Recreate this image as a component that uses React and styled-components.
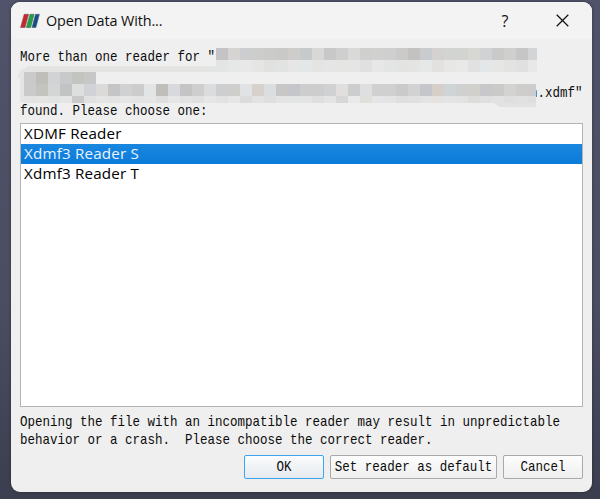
import React from "react";
import styled, { createGlobalStyle } from "styled-components";

const GlobalStyle = createGlobalStyle`
  * { box-sizing: border-box; }
  body { margin: 0; overflow: hidden; }
`;

const Desktop = styled.main`
  width: 600px;
  height: 499px;
  padding: 2px 8px 7px 11px;
  background: linear-gradient(180deg, #505369 0%, #4b4e62 60%, #3b3e4e 100%);
`;

const Dialog = styled.section`
  height: 490px;
  display: flex;
  flex-direction: column;
  overflow: hidden;
  border-radius: 9px;
  background: #efefef;
  box-shadow: 0 0 3px rgba(25, 27, 40, 0.6);
`;

const TitleBar = styled.header`
  height: 37px;
  flex: none;
  display: flex;
  align-items: center;
  padding: 0 23px 0 9px;
  background: #f3f3f3;
`;

const Title = styled.h1`
  margin: 0 auto 0 6px;
  font: 400 14.4px/20px "Open Sans", sans-serif;
  letter-spacing: -0.1px;
  color: #111;
`;

const TitleButton = styled.button`
  display: flex;
  align-items: center;
  justify-content: center;
  width: 14px;
  height: 20px;
  padding: 0;
  margin-left: ${(p) => p.$gap || 0}px;
  border: 0;
  background: none;
  color: #111;
  font: 400 16px/18px "Open Sans", sans-serif;
`;

const Body = styled.div`
  flex: 1;
  display: flex;
  flex-direction: column;
  padding: 9px 9px 13px 9px;
`;

const Message = styled.div`
  position: relative;
  flex: none;
  height: ${(p) => p.$height}px;
`;

const Mono = styled.div`
  width: 120%;
  height: 18px;
  transform: scaleX(0.8333);
  transform-origin: left center;
  white-space: pre;
  font: 400 15px/20px "Liberation Mono", monospace;
  color: #0c0c0c;
`;

const Mosaic = styled.div`
  position: absolute;
  left: ${(p) => p.$x}px;
  top: ${(p) => p.$y}px;
  width: ${(p) => p.$w}px;
  height: ${(p) => p.$h}px;
  display: flex;
  overflow: hidden;
`;

const Cell = styled.span`
  flex: 0 0 12px;
  background: ${(p) => p.$color};
`;

const Smudge = styled.svg`
  position: absolute;
  left: -8px;
  top: 17px;
`;

const List = styled.ul`
  height: 284px;
  flex: none;
  margin: 2px 0 6px;
  padding: 0;
  list-style: none;
  border: 1px solid #b4b4b4;
  background: #fff;
`;

const Item = styled.li`
  height: 20px;
  padding-left: 3px;
  font: 400 15.2px/18px "Open Sans", sans-serif;
  letter-spacing: 0.18px;
  color: ${(p) => (p.$selected ? "#e9f4ff" : "#000")};
  background: ${(p) => (p.$selected ? "linear-gradient(#1a87df, #0b7bd9)" : "transparent")};
`;

const Actions = styled.footer`
  display: flex;
  justify-content: flex-end;
  gap: 6px;
  margin-top: 6px;
`;

const Button = styled.button`
  width: ${(p) => p.$width}px;
  height: 24px;
  padding: 0;
  display: flex;
  align-items: center;
  justify-content: center;
  border: 1px solid ${(p) => (p.$primary ? "#3ba4ef" : "#a9a9a9")};
  border-radius: 2px;
  background: ${(p) => (p.$primary ? "linear-gradient(#fbfcfd, #e5eaef)" : "linear-gradient(#fdfdfd, #efefef)")};
`;

const ButtonText = styled.span`
  flex: none;
  padding-top: 2px;
  transform: scaleX(0.8333);
  white-space: pre;
  font: 400 15px/20px "Liberation Mono", monospace;
  color: #0c0c0c;
`;

const mosaics = [
  { x: 196, y: 0, w: 321, h: 12, colors: "c4c4c6 d6d4d2 cccdcf cdcdcb cbcbca c9c9c8 cecdcb c6cacb d8d8d6 c8c8c8 cfcfcf d9d9d7 cfcfcf d0d0ce cfcfcf cacac9 c3c2c0 c8cccf d4d2d0 d2d4d3 d3d3d2 d7d7d4 d0d2d4 cacaca cfcfcd c6c6c6 d3d4d6" },
  { x: 196, y: 12, w: 321, h: 12, colors: "e3e5e4 e6e7e7 e8e8e8 e5e5e4 e0e1e0 e1e3e2 e6e6e6 e4e7e7 e4e4e2 e5e5e5 e5e5e4 e5e5e5 e0e0e1 e7e7e7 e3e5e4 e3e3e2 e4e4e2 e5e8e7 e3e1e0 e7e7e7 e9e9e7 e1e1e1 e4e7e7 e6e6e5 e3e3e3 e0e0e0 e8e8e8" },
  { x: 4, y: 24, w: 72, h: 12, colors: "cacaca bfbeb9 d1d3d5 c8c9ca c3c3bf c7c7c7" },
  { x: 4, y: 36, w: 512, h: 12, colors: "cacaca c3c3c0 d4d6d5 c3c3c3 dddfde d1d2d5 dcdad8 c5c5c5 cfd1d2 cccccc e3e4e5 bfbeba d8d9dc c4c4c4 cececf dbdcdd cdcecf cececc e1e2e4 d7d1cc dadee1 c8c7c6 c5c6c9 cecdcd cdcdcd d0d1d2 e0dfdd cbcecc dfdfe2 d0d0d0 d0d0d0 cacaca d2d2d2 c5c6ca d5cec9 cfd4d7 d0d0d0 d1d0cd c8c8ca cacac9 d3d3d2 cecdcb cccccc" },
  { x: 4, y: 48, w: 512, h: 7, colors: "e3e3e3 e5e5e4 e1e2e2 e5e5e5 c9c9c9 e1e1e1 e5e5e5 e3e3e3 e5e7e7 e4e4e4 e5e5e5 dfdfdd e6e6e6 e2e2e2 e0e0e0 e6e6e6 e2e2e3 e6e6e6 dcdcdc e2e2e3 dfdfdf e3e3e3 e2e4e3 e3e3e3 dfdfdf e3e3e3 d7d7d7 e9e9e9 dfdfdc e5e5e5 e3e3e3 dfdfdf e0e0df e3e3e3 e5e1df e3e5e5 e2e2e2 dddddb e0e0e0 e2e2e2 dfdfdf e1e1e1 dfdfdf" },
];

const readers = ["XDMF Reader", "Xdmf3 Reader S", "Xdmf3 Reader T"];

function Logo() {
  return (
    <svg width="20" height="16" viewBox="0 0 20 16">
      <path d="M4.2 1.3h4.4L5 14.5H.6z" fill="#c9272d" stroke="#765356" strokeWidth=".6" />
      <path d="M10 1.3h4.1l-3.5 13.2H6.4z" fill="#1fa247" stroke="#48684d" strokeWidth=".6" />
      <path d="M15.5 1.3h3.9l-3.5 13.2H12z" fill="#104f8c" stroke="#53616e" strokeWidth=".6" />
    </svg>
  );
}

export default function App() {
  return (
    <>
      <GlobalStyle />
      <Desktop>
        <Dialog>
          <TitleBar>
            <Logo />
            <Title>Open Data With...</Title>
            <TitleButton aria-label="Help">?</TitleButton>
            <TitleButton $gap={43} aria-label="Close">
              <svg width="13" height="13" viewBox="0 0 13 13">
                <path d="M.7.7l11.6 11.6M12.3.7L.7 12.3" stroke="#111" strokeWidth="1.25" />
              </svg>
            </TitleButton>
          </TitleBar>
          <Body>
            <Message $height={73}>
              <Mono>{'More than one reader for "'}</Mono>
              <Mono />
              <Mono>{" ".repeat(68) + 'n.xdmf"'}</Mono>
              <Mono>found. Please choose one:</Mono>
              <Smudge width="526" height="43" viewBox="0 0 526 43">
                <path d="M8 6l8-5h188v6H84v12H12v-4l-7-3z" fill="#e4e4e3" />
                <path d="M8 12h5v25H8z" fill="#e3e4e3" />
                <path d="M80 36h398l10 6h36v-6z" fill="#e2e2e2" />
              </Smudge>
              {mosaics.map((m) => (
                <Mosaic key={`${m.x}-${m.y}`} $x={m.x} $y={m.y} $w={m.w} $h={m.h}>
                  {m.colors.split(" ").map((c, i) => (
                    <Cell key={i} $color={`#${c}`} />
                  ))}
                </Mosaic>
              ))}
            </Message>
            <List>
              {readers.map((name, i) => (
                <Item key={name} $selected={i === 1}>{name}</Item>
              ))}
            </List>
            <Message $height={36}>
              <Mono>Opening the file with an incompatible reader may result in unpredictable</Mono>
              <Mono>{"behavior or a crash.  Please choose the correct reader."}</Mono>
            </Message>
            <Actions>
              <Button $primary $width={80}><ButtonText>OK</ButtonText></Button>
              <Button $width={167}><ButtonText>Set reader as default</ButtonText></Button>
              <Button $width={80}><ButtonText>Cancel</ButtonText></Button>
            </Actions>
          </Body>
        </Dialog>
      </Desktop>
    </>
  );
}
